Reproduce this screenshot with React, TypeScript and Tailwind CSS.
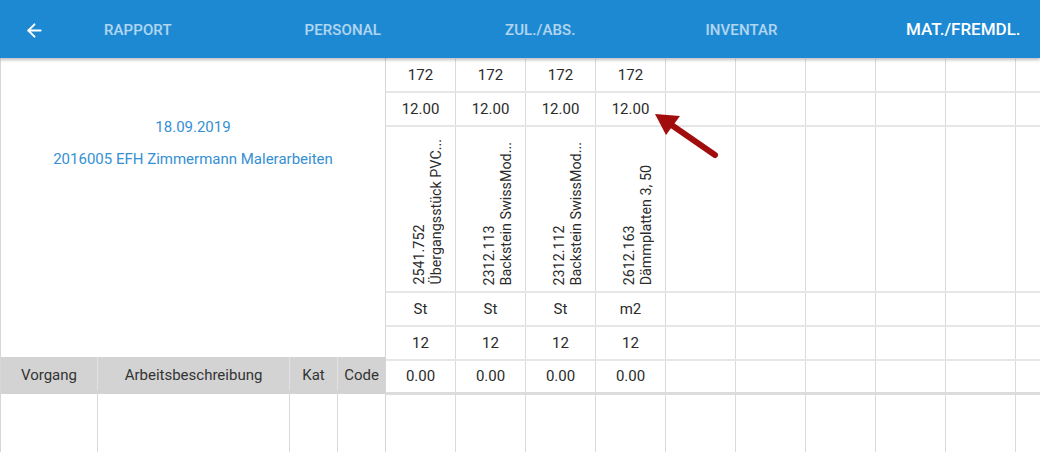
import { ArrowLeft } from 'lucide-react';

// Materialpositionen (Spalten rechts)
const materials = [
  { nr: '172', menge: '12.00', code: '2541.752', name: 'Übergangsstück PVC...', unit: 'St', qty: '12', total: '0.00' },
  { nr: '172', menge: '12.00', code: '2312.113', name: 'Backstein SwissMod...', unit: 'St', qty: '12', total: '0.00' },
  { nr: '172', menge: '12.00', code: '2312.112', name: 'Backstein SwissMod...', unit: 'St', qty: '12', total: '0.00' },
  { nr: '172', menge: '12.00', code: '2612.163', name: 'Dämmplatten 3, 50', unit: 'm2', qty: '12', total: '0.00' },
];

const emptyCols = 6;

const tabs = ['RAPPORT', 'PERSONAL', 'ZUL./ABS.', 'INVENTAR'];

function ValueRow({ field, last, first }: { field: 'nr' | 'menge' | 'unit' | 'qty' | 'total'; last?: boolean; first?: boolean }) {
  return (
    <div className={`flex ${first ? 'h-[35px] pt-[1px]' : 'h-[34px]'} ${last ? 'border-b-[3px] border-[#dcdcdc]' : 'border-b-2 border-[#e6e6e6]'}`}>
      {materials.map((m, i) => (
        <div key={i} className="w-[70px] shrink-0 border-r border-[#dadada] flex items-center justify-center">
          {m[field]}
        </div>
      ))}
      {Array.from({ length: emptyCols }).map((_, i) => (
        <div key={i} className="w-[70px] shrink-0 border-r border-[#dadada]" />
      ))}
    </div>
  );
}

export default function App() {
  return (
    <div className="relative w-[1040px] h-[452px] overflow-hidden bg-white text-[15px] text-[#2b2b2b] font-['Roboto',sans-serif]">
      {/* Kopfzeile */}
      <div className="relative z-10 h-[58px] bg-[#1e89d3] flex items-center pt-[2px] shadow-[0_2px_3px_rgba(0,0,0,0.25)]">
        <div className="w-[104px] pl-[24px] flex items-center">
          <ArrowLeft className="w-[21px] h-[21px] text-white" strokeWidth={2.2} />
        </div>
        <div className="flex items-center">
          {tabs.map((t) => (
            <span key={t} className="w-[200.5px] text-[15px] font-medium text-white/65 tracking-[0.1px]">{t}</span>
          ))}
          <span className="text-[17px] font-medium text-white">MAT./FREMDL.</span>
        </div>
      </div>

      <div className="flex h-[394px]">
        {/* Linke Seite */}
        <div className="w-[386px] shrink-0 border-l border-r border-[#d6d6d6] flex flex-col">
          <div className="h-[299px] pt-[59px] flex flex-col items-center gap-[12px] text-[#3590d3]">
            <div className="leading-[20px]">18.09.2019</div>
            <div className="leading-[20px]">2016005 EFH Zimmermann Malerarbeiten</div>
          </div>
          <div className="h-[37px] bg-[#d3d3d3] flex items-center pb-[4px] text-[#333]">
            <div className="w-[97px] h-full border-r border-[#e2e2e2] flex items-center justify-center pt-[3px]">Vorgang</div>
            <div className="w-[192px] h-full border-r border-[#e2e2e2] flex items-center justify-center pt-[3px]">Arbeitsbeschreibung</div>
            <div className="w-[48px] h-full border-r border-[#e2e2e2] flex items-center justify-center pt-[3px]">Kat</div>
            <div className="flex-1 h-full flex items-center justify-center pt-[3px]">Code</div>
          </div>
          <div className="flex-1 flex">
            <div className="w-[97px] border-r border-[#dadada]" />
            <div className="w-[192px] border-r border-[#dadada]" />
            <div className="w-[48px] border-r border-[#dadada]" />
            <div className="flex-1" />
          </div>
        </div>

        {/* Materialspalten */}
        <div className="flex flex-col flex-1 overflow-hidden">
          <ValueRow field="nr" first />
          <ValueRow field="menge" />
          <div className="flex h-[166px] shrink-0 border-b-2 border-[#e6e6e6]">
            {materials.map((m, i) => (
              <div key={i} className="w-[70px] shrink-0 border-r border-[#dadada] flex items-end justify-center pb-[6px] pl-[14px]">
                <div className="[writing-mode:vertical-rl] rotate-180 text-[14.3px] leading-[17px] whitespace-nowrap">
                  <div>{m.code}</div>
                  <div>{m.name}</div>
                </div>
              </div>
            ))}
            {Array.from({ length: emptyCols }).map((_, i) => (
              <div key={i} className="w-[70px] shrink-0 border-r border-[#dadada]" />
            ))}
          </div>
          <ValueRow field="unit" />
          <ValueRow field="qty" />
          <ValueRow field="total" last />
          <div className="flex flex-1">
            {Array.from({ length: materials.length + emptyCols }).map((_, i) => (
              <div key={i} className="w-[70px] shrink-0 border-r border-[#dadada]" />
            ))}
          </div>
        </div>
      </div>

      {/* Markierungspfeil */}
      <svg className="absolute left-0 top-0 pointer-events-none" width="1040" height="452">
        <line x1="715" y1="155" x2="673" y2="126" stroke="#a10d0d" strokeWidth="6" strokeLinecap="round" />
        <polygon points="655,114 680,116 666,135" fill="#a10d0d" />
      </svg>
    </div>
  );
}
